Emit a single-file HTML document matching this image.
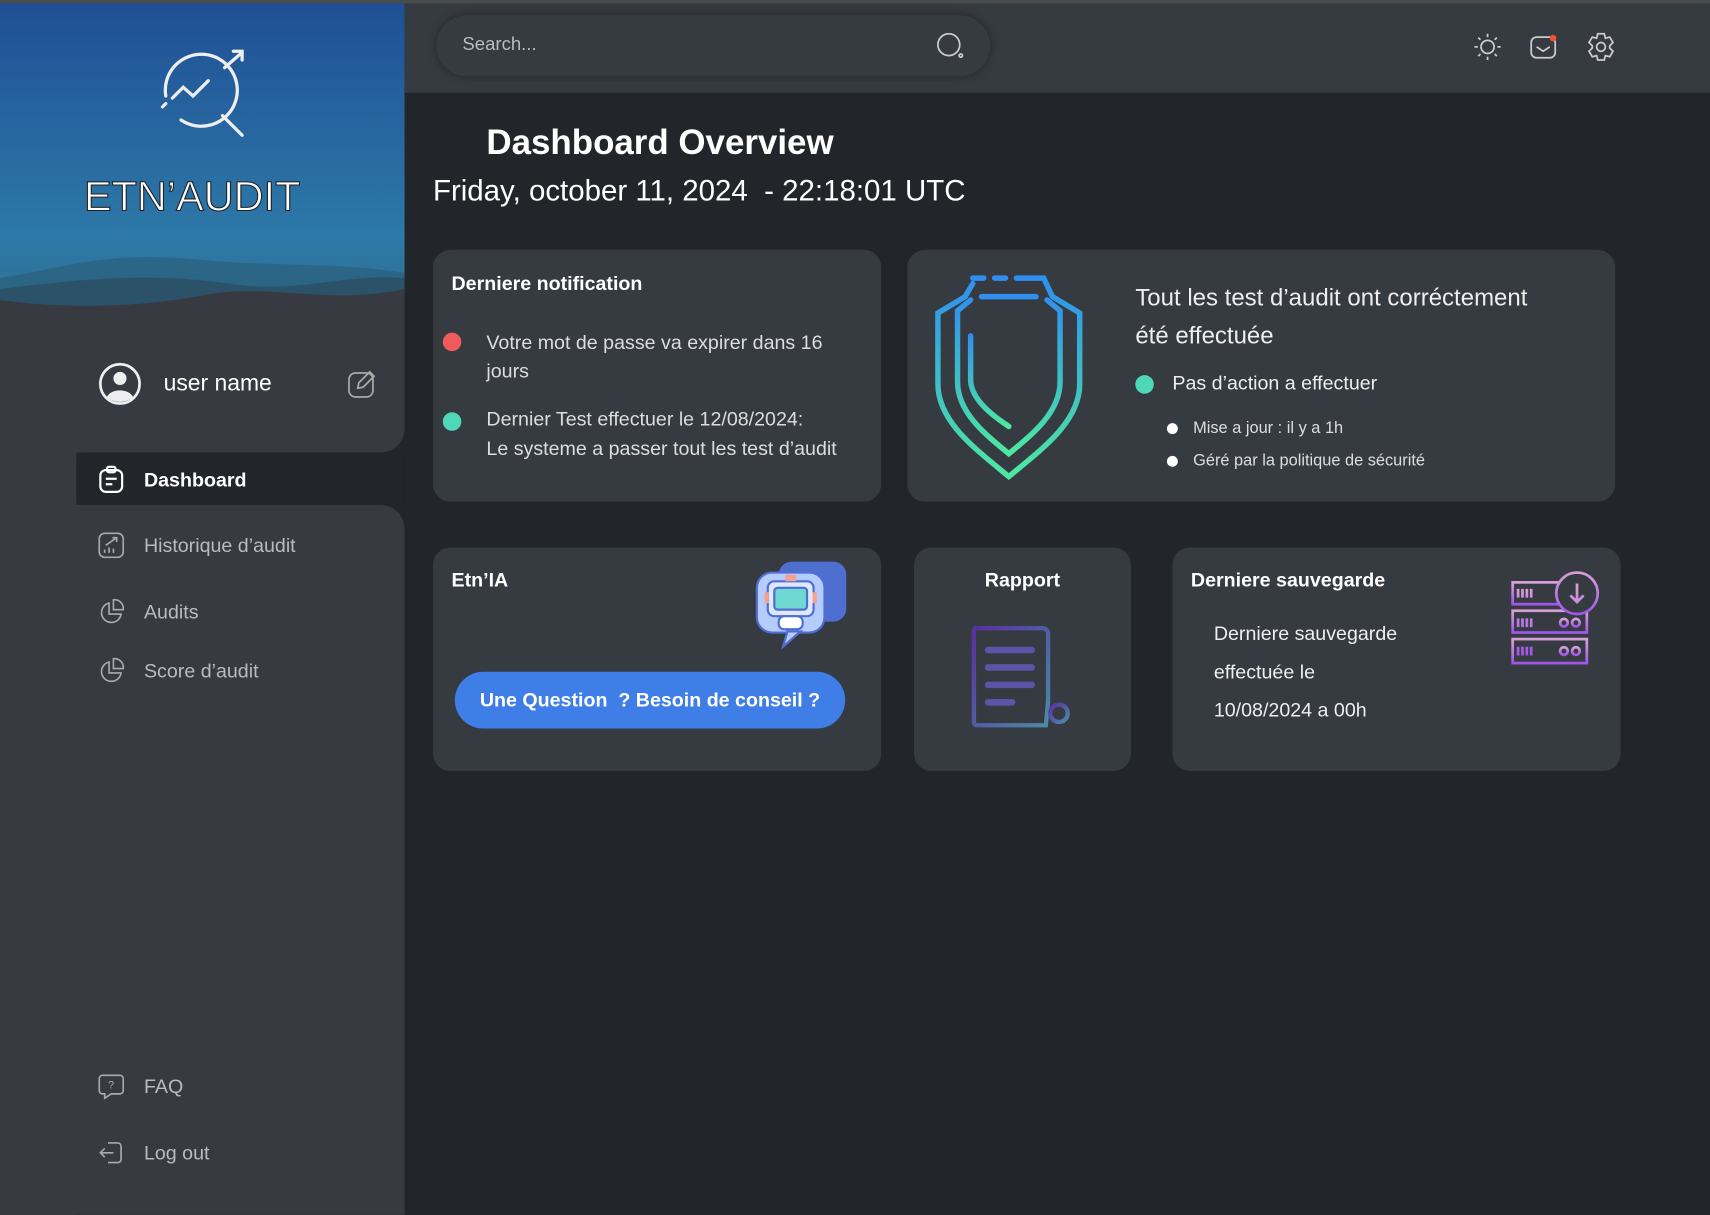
<!DOCTYPE html>
<html><head><meta charset="utf-8"><style>
*{margin:0;padding:0;box-sizing:border-box}
html,body{width:1710px;height:1215px;overflow:hidden;background:#222529}
#w{width:1568px;height:1114px;transform:scale(1.0906);transform-origin:0 0;position:relative;background:#222529;font-family:"Liberation Sans",sans-serif;color:#fff}
.abs{position:absolute}
.card{position:absolute;background:#363a41;border-radius:16px}
.b{font-weight:bold}
.nav{position:absolute;left:90px;font-size:18px;color:#b8bbc0;display:flex;align-items:center;gap:18px}
</style></head><body><div id="w">
<!-- sidebar -->
<div class="abs" style="left:0;top:0;width:371px;height:1114px;background:#222529"></div>
<div class="abs" style="left:0;top:0;width:70px;height:1114px;background:#373a41"></div>
<div class="abs" style="left:0;top:0;width:371px;height:415px;background:#373a41;border-bottom-right-radius:22px;overflow:hidden">
 <div class="abs" style="left:0;top:0;width:371px;height:290px;background:linear-gradient(#1f4f95,#2d79a8 75%,#2f6f8f)"></div>
 <svg class="abs" style="left:0;top:200px" width="371" height="100" viewBox="0 0 371 100">
  <path d="M0 55 C60 45 100 30 180 38 C260 45 300 40 371 50 L371 100 L0 100Z" fill="#2a5b76" opacity=".6"/>
  <path d="M0 65 C80 55 140 50 210 60 C270 70 320 50 371 55 L371 100 L0 100Z" fill="#2d4a5e" opacity=".7"/>
  <path d="M0 75 C70 85 140 80 190 70 C250 60 300 80 371 65 L371 100 L0 100Z" fill="#373a41"/>
 </svg>
 <svg class="abs" style="left:140px;top:40px" width="95" height="90" viewBox="0 0 95 90" fill="none" stroke="#eee" stroke-width="3" stroke-linecap="round">
  <path d="M12 48 A33 33 0 1 1 26 70"/><path d="M9 58 l3-3"/><path d="M18 50 l10-10 9 8 14-14"/><path d="M64 66 l18 18"/><path d="M66 22 l16-14 M74 7 h8 v8"/>
 </svg>
 <div class="abs" style="left:77px;top:160px;font-size:38px;letter-spacing:0;color:#fff;-webkit-text-stroke:1px #222">ETN’AUDIT</div>
 <svg class="abs" style="left:90px;top:332px" width="40" height="40" viewBox="0 0 40 40"><circle cx="20" cy="20" r="18" fill="none" stroke="#eee" stroke-width="2.5"/><circle cx="20" cy="15" r="6" fill="#eee"/><path d="M8 32 C12 24 28 24 32 32 A18 18 0 0 1 8 32Z" fill="#eee"/></svg>
 <div class="abs" style="left:150px;top:340px;font-size:21px">user name</div>
 <svg class="abs" style="left:319px;top:339px" width="26" height="26" viewBox="0 0 26 26" fill="none" stroke="#aaa" stroke-width="1.6"><rect x="1" y="3" width="22" height="22" rx="6"/><path d="M9 17 l1-5 10-10 4 4-10 10z"/></svg>
</div>
<div class="abs" style="left:0;top:415px;width:371px;height:48px;background:#222529"></div>
<div class="abs" style="left:0;top:415px;width:70px;height:48px;background:#373a41"></div>
<div class="abs" style="left:70px;top:415px;width:301px;height:48px;background:#222529;border-radius:14px 0 0 14px"></div>
<div class="abs" style="left:0;top:463px;width:371px;height:651px;background:#373a41;border-top-right-radius:22px"></div>
<div class="nav" style="top:427px;color:#fff;font-weight:bold"><svg width="24" height="26" viewBox="0 0 24 26" fill="none" stroke="#fff" stroke-width="2"><rect x="2" y="4" width="20" height="20" rx="5"/><rect x="8" y="1" width="8" height="5" rx="2"/><path d="M7 12h10M7 17h6"/></svg>Dashboard</div>
<div class="nav" style="top:488px"><svg width="24" height="24" viewBox="0 0 24 24" fill="none" stroke="#aaa" stroke-width="1.5"><rect x="1" y="1" width="22" height="22" rx="5"/><path d="M6 19v-3M10 19v-5M14 19v-4M7 12l10-7M13 5h4v4"/></svg>Historique d’audit</div>
<div class="nav" style="top:549px"><svg width="24" height="24" viewBox="0 0 24 24" fill="none" stroke="#aaa" stroke-width="1.5"><path d="M10 4A9 9 0 1 0 21 14H10Z"/><path d="M14 1A8 8 0 0 1 23 10H14Z"/></svg>Audits</div>
<div class="nav" style="top:603px"><svg width="24" height="24" viewBox="0 0 24 24" fill="none" stroke="#aaa" stroke-width="1.5"><path d="M10 4A9 9 0 1 0 21 14H10Z"/><path d="M14 1A8 8 0 0 1 23 10H14Z"/></svg>Score d’audit</div>
<div class="nav" style="top:984px"><svg width="24" height="24" viewBox="0 0 24 24" fill="none" stroke="#aaa" stroke-width="1.5"><path d="M4 2h16a3 3 0 0 1 3 3v11a3 3 0 0 1-3 3H12l-6 4v-4H4a3 3 0 0 1-3-3V5a3 3 0 0 1 3-3z"/><text x="9" y="14" font-size="10" fill="#aaa" stroke="none">?</text></svg>FAQ</div>
<div class="nav" style="top:1045px"><svg width="24" height="24" viewBox="0 0 24 24" fill="none" stroke="#aaa" stroke-width="1.5"><path d="M9 3h9a3 3 0 0 1 3 3v12a3 3 0 0 1-3 3H9M14 12H2M6 8l-4 4 4 4"/></svg>Log out</div>

<!-- header -->
<div class="abs" style="left:371px;top:0;width:1197px;height:85px;background:#363a41"></div>
<div class="abs" style="left:0;top:0;width:1568px;height:3px;background:#4a4b4d"></div>
<div class="abs" style="left:400px;top:14px;width:508px;height:56px;border-radius:28px;background:#363a41;box-shadow:0 0 8px rgba(0,0,0,.35)"></div>
<div class="abs" style="left:424px;top:31px;font-size:17px;color:#b9bcc0">Search...</div>
<svg class="abs" style="left:858px;top:30px" width="28" height="26" viewBox="0 0 28 26" fill="none" stroke="#ccc" stroke-width="1.6"><circle cx="12" cy="11" r="10"/><circle cx="23" cy="21" r="1.5"/></svg>
<svg class="abs" style="left:1350px;top:29px" width="28" height="28" viewBox="0 0 28 28" fill="none" stroke="#ccc" stroke-width="1.6"><circle cx="14" cy="14" r="6"/><path d="M14 2v3M14 23v3M2 14h3M23 14h3M5.5 5.5l2 2M20.5 20.5l2 2M5.5 22.5l2-2M20.5 7.5l2-2"/></svg>
<svg class="abs" style="left:1402px;top:30px" width="28" height="26" viewBox="0 0 28 26" fill="none" stroke="#ccc" stroke-width="1.6"><rect x="2" y="4" width="22" height="19" rx="5"/><path d="M7 13l6 4 6-4"/><circle cx="22" cy="5" r="3" fill="#e53" stroke="none"/></svg>
<svg class="abs" style="left:1454px;top:29px" width="28" height="28" viewBox="0 0 28 28" fill="none" stroke="#ccc" stroke-width="1.6"><path d="M11 2h6l1 4 4-1 3 5-3 3 0 2 3 3-3 5-4-1-1 4h-6l-1-4-4 1-3-5 3-3v-2l-3-3 3-5 4 1z"/><circle cx="14" cy="14" r="4"/></svg>

<div class="abs b" style="left:446px;top:112px;font-size:32px">Dashboard Overview</div>
<div class="abs" style="left:397px;top:160px;font-size:27px">Friday, october 11, 2024 &nbsp;- 22:18:01 UTC</div>

<!-- notif card -->
<div class="card" style="left:397px;top:229px;width:411px;height:231px"></div>
<div class="abs b" style="left:414px;top:250px;font-size:18px">Derniere notification</div>
<div class="abs" style="left:406px;top:305px;width:17px;height:17px;border-radius:50%;background:#ef5b5b"></div>
<div class="abs" style="left:446px;top:301px;width:350px;font-size:18px;line-height:26px;color:#ddd">Votre mot de passe va expirer dans 16 jours</div>
<div class="abs" style="left:406px;top:378px;width:17px;height:17px;border-radius:50%;background:#4fd8b8"></div>
<div class="abs" style="left:446px;top:371px;width:362px;font-size:18px;line-height:27px;color:#ddd;white-space:nowrap">Dernier Test effectuer le 12/08/2024:<br>Le systeme a passer tout les test d’audit</div>

<!-- status card -->
<div class="card" style="left:832px;top:229px;width:649px;height:231px"></div>
<svg class="abs" style="left:852px;top:250px" width="145" height="190" viewBox="0 0 145 190" fill="none" stroke-width="5" stroke-linecap="round">
<defs><linearGradient id="g" x1="0" y1="0" x2="0" y2="1"><stop offset="0" stop-color="#2f8ff0"/><stop offset="1" stop-color="#4ee8a0"/></linearGradient></defs>
<g stroke="url(#g)"><path d="M40 5h10M60 5h10M80 5h25l8 17 25 15v65c0 35-35 60-65 85C43 162 8 137 8 102V37l25-15 7-12"/><path d="M38 25l-12 10v65c0 28 25 48 47 66 22-18 47-38 47-66V35l-12-10M48 22h50"/><path d="M38 58v40c0 18 20 33 35 43"/><path d="M38 45v5"/></g></svg>
<div class="abs" style="left:1041px;top:255px;font-size:22px;line-height:35px;color:#eee">Tout les test d’audit ont corréctement<br>été effectuée</div>
<div class="abs" style="left:1041px;top:344px;width:17px;height:17px;border-radius:50%;background:#4fd8b8"></div>
<div class="abs" style="left:1075px;top:341px;font-size:18px;color:#eee">Pas d’action a effectuer</div>
<div class="abs" style="left:1070px;top:388px;width:10px;height:10px;border-radius:50%;background:#fff"></div>
<div class="abs" style="left:1094px;top:384px;font-size:15px;color:#ddd">Mise a jour : il y a 1h</div>
<div class="abs" style="left:1070px;top:418px;width:10px;height:10px;border-radius:50%;background:#fff"></div>
<div class="abs" style="left:1094px;top:414px;font-size:15px;color:#ddd">Géré par la politique de sécurité</div>

<!-- IA card -->
<div class="card" style="left:397px;top:502px;width:411px;height:205px"></div>
<div class="abs b" style="left:414px;top:522px;font-size:18px">Etn’IA</div>
<svg class="abs" style="left:692px;top:513px" width="88" height="82" viewBox="0 0 88 82">
<rect x="22" y="2" width="62" height="55" rx="12" fill="#4f6fd0"/><rect x="2" y="12" width="62" height="55" rx="14" fill="#b5ccff" stroke="#4f6fd0" stroke-width="2"/><path d="M30 66l-4 14 16-14z" fill="#b5ccff" stroke="#4f6fd0" stroke-width="2"/>
<rect x="12" y="20" width="42" height="32" rx="6" fill="#dfe8ff" stroke="#4f6fd0" stroke-width="2"/><rect x="18" y="26" width="30" height="20" rx="3" fill="#6fd8d0" stroke="#4f6fd0" stroke-width="2"/><rect x="9" y="30" width="4" height="10" fill="#f5a090"/><rect x="53" y="30" width="4" height="10" fill="#f5a090"/><rect x="28" y="14" width="10" height="6" fill="#f5a090"/><rect x="22" y="52" width="22" height="12" rx="5" fill="#fff" stroke="#4f6fd0" stroke-width="2"/></svg>
<div class="abs b" style="left:417px;top:616px;width:358px;height:52px;border-radius:26px;background:#3f7ee6;font-size:18px;text-align:center;line-height:52px">Une Question &nbsp;? Besoin de conseil ?</div>

<!-- rapport -->
<div class="card" style="left:838px;top:502px;width:199px;height:205px"></div>
<div class="abs b" style="left:838px;top:522px;width:199px;text-align:center;font-size:18px">Rapport</div>
<svg class="abs" style="left:888px;top:572px" width="100" height="98" viewBox="0 0 100 98" fill="none" stroke-width="4" stroke-linecap="round">
<defs><linearGradient id="r" x1="0" y1="0" x2="1" y2="1"><stop offset="0" stop-color="#5a2fa0"/><stop offset="1" stop-color="#4a8aa8"/></linearGradient></defs>
<g stroke="url(#r)"><path d="M6 4h62a5 5 0 0 1 5 5v62l-2 22H8a3 3 0 0 1-3-3V6z"/><circle cx="83" cy="82" r="8"/><path d="M71 93h12"/></g>
<g stroke="#5a55a8" stroke-width="6"><path d="M18 24h40M18 40h40M18 56h40M18 72h22"/></g></svg>

<!-- sauvegarde -->
<div class="card" style="left:1075px;top:502px;width:411px;height:205px"></div>
<div class="abs b" style="left:1092px;top:522px;font-size:18px">Derniere sauvegarde</div>
<div class="abs" style="left:1113px;top:564px;font-size:18px;line-height:35px;color:#eee">Derniere sauvegarde<br>effectuée le<br>10/08/2024 a 00h</div>
<svg class="abs" style="left:1384px;top:522px" width="86" height="92" viewBox="0 0 86 92" fill="none" stroke-width="2.5">
<defs><linearGradient id="s" x1="0" y1="0" x2="0" y2="1"><stop offset="0" stop-color="#d8a0d8"/><stop offset="1" stop-color="#a055e8"/></linearGradient></defs>
<g stroke="url(#s)"><rect x="3" y="12" width="68" height="20"/><rect x="3" y="38" width="68" height="20"/><rect x="3" y="64" width="68" height="22"/><circle cx="62" cy="22" r="19" fill="#363a41"/><path d="M62 13v16M56 24l6 6 6-6M8 18v8M12 18v8M16 18v8M20 18v8M8 45v8M12 45v8M16 45v8M20 45v8M8 71v8M12 71v8M16 71v8M20 71v8"/><circle cx="50" cy="49" r="3.5"/><circle cx="61" cy="49" r="3.5"/><circle cx="50" cy="75" r="3.5"/><circle cx="61" cy="75" r="3.5"/></g></svg>
</div></body></html>
